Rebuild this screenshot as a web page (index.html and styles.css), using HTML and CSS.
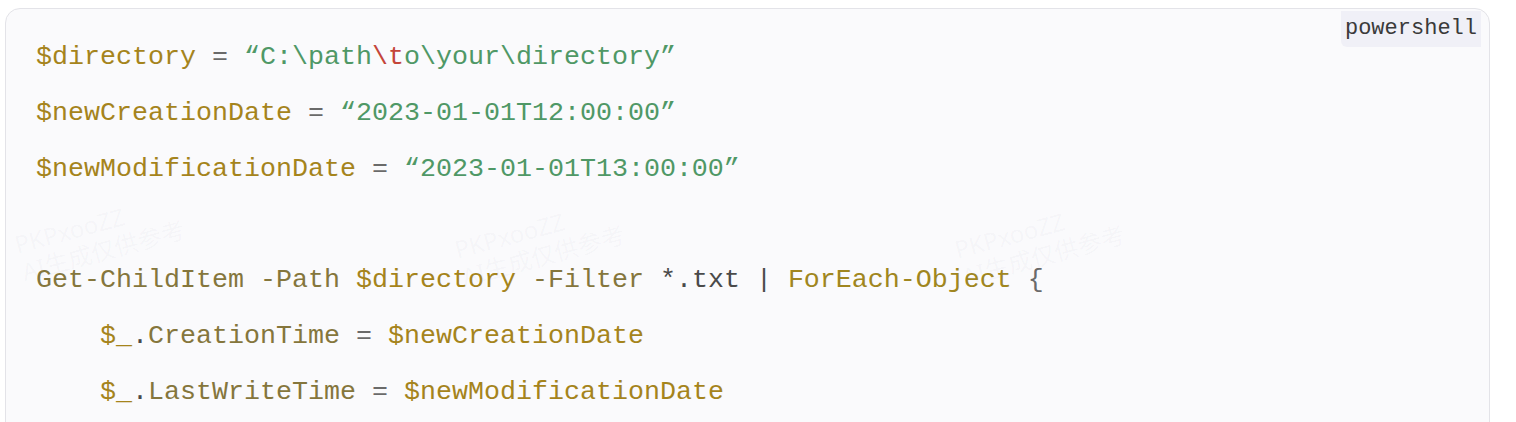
FILE: index.html
```html
<!DOCTYPE html>
<html lang="en">
<head>
<meta charset="utf-8">
<title>powershell</title>
<link rel="stylesheet" href="styles.css">
</head>
<body>
<div class="card">
  <span class="lang">powershell</span>
  <div class="code">
    <div class="line"><span class="var">$directory</span> <span class="op">=</span> <span class="str">“C:\path<span class="esc">\t</span>o\your\directory”</span></div>
    <div class="line"><span class="var">$newCreationDate</span> <span class="op">=</span> <span class="str">“2023-01-01T12:00:00”</span></div>
    <div class="line"><span class="var">$newModificationDate</span> <span class="op">=</span> <span class="str">“2023-01-01T13:00:00”</span></div>
    <div class="line"></div>
    <div class="line"><span class="cmd">Get-ChildItem</span> <span class="cmd">-Path</span> <span class="var">$directory</span> <span class="cmd">-Filter</span> <span class="plain">*.txt</span> <span class="plain">|</span> <span class="fn">ForEach-Object</span> <span class="op">{</span></div>
    <div class="line">    <span class="var">$_</span><span class="plain">.</span><span class="cmd">CreationTime</span> <span class="op">=</span> <span class="var">$newCreationDate</span></div>
    <div class="line">    <span class="var">$_</span><span class="plain">.</span><span class="cmd">LastWriteTime</span> <span class="op">=</span> <span class="var">$newModificationDate</span></div>
  </div>
  <div class="wm wm1">PKPxooZZ<br>AI生成仅供参考</div>
  <div class="wm wm2">PKPxooZZ<br>AI生成仅供参考</div>
  <div class="wm wm3">PKPxooZZ<br>AI生成仅供参考</div>
</div>
</body>
</html>
```
FILE: styles.css
```css
html, body {
  margin: 0;
  padding: 0;
  background: #ffffff;
  overflow: hidden;
}
body {
  height: 422px;
}
.card {
  position: relative;
  margin: 8px 0 0 5px;
  width: 1485px;
  height: 480px;
  box-sizing: border-box;
  background: #fafafc;
  border: 1px solid #e3e3e8;
  border-radius: 15px;
  padding: 21px 0 0 30px;
  overflow: hidden;
}
.lang {
  position: absolute;
  top: 2px;
  right: 8px;
  background: #f0f0f7;
  color: #3a3a3a;
  font-family: "Liberation Mono", "DejaVu Sans Mono", monospace;
  font-size: 22px;
  line-height: 36px;
  padding: 0 4px 0 4px;
  border-radius: 0 0 0 6px;
}
.code {
  display: flex;
  flex-direction: column;
  font-family: "Liberation Mono", "DejaVu Sans Mono", monospace;
  font-size: 26.67px;
  color: #555555;
}
.line {
  height: 55.8px;
  line-height: 55.8px;
  white-space: pre;
  overflow: visible;
}
.var { color: #a5841c; }
.str { color: #4f9866; }
.esc { color: #c4453a; }
.op { color: #6a6a6a; }
.cmd { color: #85763c; }
.fn { color: #a08620; }
.plain { color: #4a4a4a; }
.wm {
  position: absolute;
  font-family: "Noto Sans", "Noto Sans CJK SC", sans-serif;
  font-size: 24px;
  line-height: 28px;
  color: rgba(120, 120, 130, 0.045);
  transform: rotate(-15deg);
  white-space: nowrap;
  pointer-events: none;
}
.wm1 { left: 10px; top: 200px; }
.wm2 { left: 450px; top: 205px; }
.wm3 { left: 950px; top: 205px; }
```
